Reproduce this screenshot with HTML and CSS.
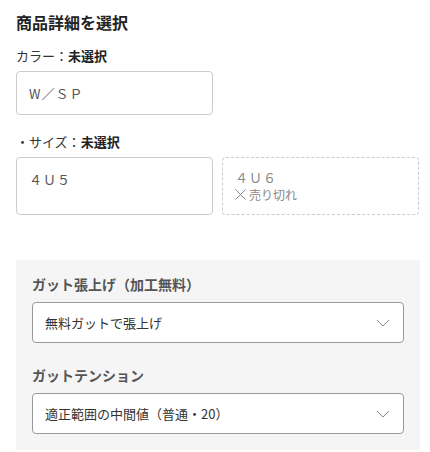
FILE: index.html
```html
<!DOCTYPE html>
<html lang="ja">
<head>
<meta charset="utf-8">
<link rel="stylesheet" href="styles.css">
</head>
<body>
<div class="page">
  <h2 class="title">商品詳細を選択</h2>
  <div class="label">カラー：<b>未選択</b></div>
  <div class="opts">
    <div class="opt opt-color">W／ＳＰ</div>
  </div>
  <div class="label label-size">・サイズ：<b>未選択</b></div>
  <div class="opts">
    <div class="opt opt-size">４Ｕ５</div>
    <div class="opt opt-size soldout">
      <span>４Ｕ６</span>
      <span class="sold"><svg class="x" width="11" height="11" viewBox="0 0 11 11"><path d="M0.5 0.5 L10.5 10.5 M10.5 0.5 L0.5 10.5" fill="none" stroke="#888" stroke-width="1"/></svg>売り切れ</span>
    </div>
  </div>
  <div class="panel">
    <div class="plabel">ガット張上げ（加工無料）</div>
    <div class="select">
      <span>無料ガットで張上げ</span>
      <svg class="chev" width="14" height="8" viewBox="0 0 14 8"><path d="M1 1 L7 7 L13 1" fill="none" stroke="#888" stroke-width="1"/></svg>
    </div>
    <div class="plabel plabel2">ガットテンション</div>
    <div class="select">
      <span>適正範囲の中間値（普通・20）</span>
      <svg class="chev" width="14" height="8" viewBox="0 0 14 8"><path d="M1 1 L7 7 L13 1" fill="none" stroke="#888" stroke-width="1"/></svg>
    </div>
  </div>
</div>
</body>
</html>
```
FILE: styles.css
```css
html, body {
  margin: 0;
  padding: 0;
  background: #fff;
}
body {
  font-family: "Noto Sans CJK JP", "Noto Sans", sans-serif;
  color: #333;
}
.page {
  padding: 10px 10px 0 16px;
}
.title {
  margin: 0;
  font-size: 16px;
  font-weight: 700;
  line-height: 24px;
  color: #222;
}
.label {
  margin-top: 12px;
  font-size: 13px;
  line-height: 20px;
  color: #333;
}
.label b {
  font-weight: 700;
  color: #222;
}
.label-size {
  margin-top: 17px;
}
.opts {
  display: grid;
  grid-template-columns: 197px 197px;
  column-gap: 9px;
  margin-top: 5px;
}
.opt {
  box-sizing: border-box;
  border: 1px solid #ccc;
  border-radius: 4px;
  font-size: 13px;
  color: #555;
  padding: 0 12px;
  letter-spacing: 1px;
}
.opt-color {
  height: 44px;
  display: flex;
  align-items: center;
}
.opt-size {
  height: 58px;
  padding-top: 13px;
  line-height: 18px;
}
.soldout {
  border: 1px dashed #ccc;
  display: flex;
  flex-direction: column;
  padding-top: 11px;
  line-height: 17px;
  color: #888;
}
.sold {
  display: flex;
  align-items: center;
  gap: 3px;
  font-size: 12px;
  letter-spacing: 0;
}
.x {
  display: block;
}
.panel {
  margin-top: 45px;
  width: 404px;
  box-sizing: border-box;
  background: #f5f5f5;
  padding: 14px 16px 16px 16px;
}
.plabel {
  font-size: 14px;
  font-weight: 700;
  color: #555;
  line-height: 20px;
}
.plabel2 {
  margin-top: 22px;
}
.select {
  margin-top: 8px;
  box-sizing: border-box;
  height: 41px;
  background: #fff;
  border: 1px solid #999;
  border-radius: 4px;
  display: flex;
  align-items: center;
  justify-content: space-between;
  padding: 0 13px 0 12px;
  font-size: 13px;
  color: #333;
}
.chev {
  display: block;
}
```
